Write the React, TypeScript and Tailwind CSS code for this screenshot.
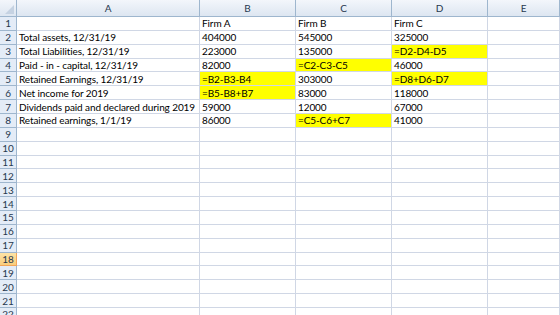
import React from "react";

const cols = ["A", "B", "C", "D", "E"];

// row data: [A, B, C, D, E]
const data: string[][] = [
  ["", "Firm A", "Firm B", "Firm C", ""],
  ["Total assets, 12/31/19", "404000", "545000", "325000", ""],
  ["Total Liabilities, 12/31/19", "223000", "135000", "=D2-D4-D5", ""],
  ["Paid - in - capital, 12/31/19", "82000", "=C2-C3-C5", "46000", ""],
  ["Retained Earnings, 12/31/19", "=B2-B3-B4", "303000", "=D8+D6-D7", ""],
  ["Net income for 2019", "=B5-B8+B7", "83000", "118000", ""],
  ["Dividends paid and declared during 2019", "59000", "12000", "67000", ""],
  ["Retained earnings, 1/1/19", "86000", "=C5-C6+C7", "41000", ""],
];

const yellow = new Set(["B5", "B6", "C4", "C8", "D3", "D5"]);
const ROWS = 22;
const SELECTED_ROW = 18;

export default function App() {
  const rows = Array.from({ length: ROWS }, (_, i) => i + 1);

  return (
    <div
      className="w-[560px] h-[315px] overflow-hidden bg-white text-black"
      style={{ fontFamily: "Lato, 'Liberation Sans', sans-serif" }}
    >
      <div className="grid grid-cols-[17px_183px_96px_96px_96px_1fr] grid-rows-[17px] auto-rows-[13.86px] text-[10px] leading-none tracking-[-0.1px]">
        {/* corner */}
        <div className="relative border-r border-b border-[#9eb6ce] bg-gradient-to-b from-[#f3f6fb] to-[#dde6f1]">
          <div className="absolute right-[2px] bottom-[2px] w-0 h-0 border-l-[9px] border-l-transparent border-b-[9px] border-b-[#c5d2e2]" />
        </div>
        {cols.map((c) => (
          <div
            key={c}
            className="flex items-center justify-center border-r border-b border-[#9eb6ce] bg-gradient-to-b from-[#f3f6fb] to-[#dde6f1] text-[#27384f]"
          >
            {c}
          </div>
        ))}

        {rows.map((r) => {
          const row = data[r - 1] || ["", "", "", "", ""];
          const selected = r === SELECTED_ROW;
          return (
            <React.Fragment key={r}>
              <div
                className={
                  selected
                    ? "flex items-center justify-center border-r border-b border-[#f2a65a] bg-gradient-to-b from-[#fde3a6] to-[#f9cd7c] text-[#27384f]"
                    : "flex items-center justify-center border-r border-b border-[#9eb6ce] bg-[#e4ecf7] text-[#27384f]"
                }
              >
                {r}
              </div>
              {row.map((v, ci) => {
                const id = cols[ci] + r;
                return (
                  <div
                    key={id}
                    className={
                      yellow.has(id)
                        ? "flex items-center pl-[2px] whitespace-nowrap overflow-hidden border-r border-b border-[#d0d7e5] bg-[#ffff00]"
                        : "flex items-center pl-[2px] whitespace-nowrap overflow-hidden border-r border-b border-[#d0d7e5]"
                    }
                  >
                    {v}
                  </div>
                );
              })}
            </React.Fragment>
          );
        })}
      </div>
    </div>
  );
}
